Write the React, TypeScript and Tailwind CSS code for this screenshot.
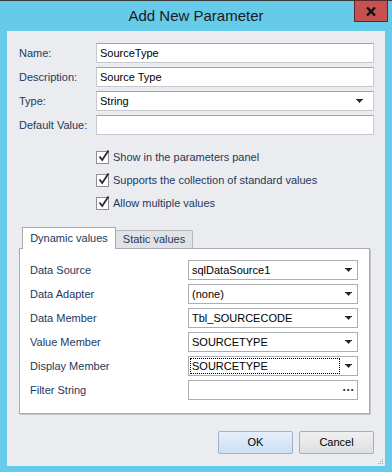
import React from "react";

const font = { fontFamily: '"Liberation Sans", Arial, sans-serif' };

function Arrow() {
  return (
    <svg width="8" height="5" viewBox="0 0 8 5" className="shrink-0">
      <path d="M0 0H7L3.5 4Z" fill="#1f2533" />
      <rect x="0" y="0" width="7" height="1" fill="#1f2533" />
    </svg>
  );
}

function TextInput({ value }: { value?: string }) {
  return (
    <div className="flex h-[20px] flex-1 items-center border border-[#c8c9ce] border-t-[#9fa2aa] bg-white pl-[3px] text-[11px] text-black">
      {value}
    </div>
  );
}

function Combo({ value, focused, ellipsis }: { value?: string; focused?: boolean; ellipsis?: boolean }) {
  return (
    <div className="flex h-[20px] w-[170px] items-center border border-[#abadb3] bg-white text-[11px] text-black">
      {focused ? (
        <div className="ml-[1px] flex h-[16px] flex-1 items-center border border-dotted border-black pl-[1px]">{value}</div>
      ) : (
        <div className="flex-1 pl-[3px]">{value}</div>
      )}
      <div className="flex w-[17px] justify-center">
        {ellipsis ? <span className="text-[12px] font-bold leading-none text-[#1f2533]">···</span> : <Arrow />}
      </div>
    </div>
  );
}

function Check({ label }: { label: string }) {
  return (
    <div className="flex h-[23px] items-center">
      <div className="relative h-[13px] w-[13px] border border-[#8f8f8f] bg-white">
        <svg width="14" height="14" viewBox="0 0 14 14" className="absolute -top-[3px] left-[0px]">
          <path d="M2.5 7.5 L5.2 11 L11.5 1.5" fill="none" stroke="#26293a" strokeWidth="1.8" />
        </svg>
      </div>
      <span className="ml-[4px] text-[11px] text-[#1e395b]">{label}</span>
    </div>
  );
}

export default function App() {
  const top = [
    ["Name:", "SourceType"],
    ["Description:", "Source Type"],
  ];
  const dyn: [string, string, boolean?, boolean?][] = [
    ["Data Source", "sqlDataSource1"],
    ["Data Adapter", "(none)"],
    ["Data Member", "Tbl_SOURCECODE"],
    ["Value Member", "SOURCETYPE"],
    ["Display Member", "SOURCETYPE", true],
    ["Filter String", "", false, true],
  ];
  return (
    <div style={font} className="flex h-[472px] w-[392px] flex-col border-t border-[#3a3a3a] bg-[#65cbe9]">
      <div className="relative flex h-[30px] items-center justify-center">
        <span className="text-[15px] text-[#1b1b1b]">Add New Parameter</span>
        <div className="absolute right-[4px] top-[-1px] flex h-[22px] w-[34px] items-center justify-center border border-[#5a2a2a] bg-[#c75050]">
          <svg width="10" height="9" viewBox="0 0 10 9">
            <path d="M1 0.5 L9 8.5 M9 0.5 L1 8.5" stroke="#111" strokeWidth="2.4" />
          </svg>
        </div>
      </div>
      <div className="mx-[7px] mb-[6px] flex flex-1 flex-col bg-[#ebecf0] pl-[12px] pr-[11px] pt-[12px]">
        <div className="flex flex-col gap-[4px]">
          {top.map(([l, v]) => (
            <div key={l} className="flex items-center">
              <span className="w-[77px] text-[11px] text-[#1e395b]">{l}</span>
              <TextInput value={v} />
            </div>
          ))}
          <div className="flex items-center">
            <span className="w-[77px] text-[11px] text-[#1e395b]">Type:</span>
            <div className="flex h-[20px] flex-1 items-center border border-[#c8c9ce] border-t-[#9fa2aa] bg-white pl-[3px] pr-[9px] text-[11px] text-black">
              <span className="flex-1">String</span>
              <Arrow />
            </div>
          </div>
          <div className="flex items-center">
            <span className="w-[77px] text-[11px] text-[#1e395b]">Default Value:</span>
            <TextInput />
          </div>
        </div>
        <div className="mt-[11px] flex flex-col pl-[77px]">
          <Check label="Show in the parameters panel" />
          <Check label="Supports the collection of standard values" />
          <Check label="Allow multiple values" />
        </div>
        <div className="mt-[12px] flex w-[351px] flex-col">
          <div className="relative z-10 flex h-[21px] items-end pl-[3px]">
            <div className="flex h-[22px] w-[94px] items-center justify-center self-start border border-b-0 border-[#a9abb0] bg-white text-[11px] text-[#1e395b]">
              Dynamic values
            </div>
            <div className="flex h-[18px] w-[77px] items-center justify-center rounded-tr-[2px] border border-l-0 border-b-0 border-[#b5b7bc] bg-[#e1e2e6] text-[11px] text-[#1e395b]">
              Static values
            </div>
          </div>
          <div className="flex h-[166px] flex-col gap-[4px] border border-[#a9abb0] bg-white pl-[10px] pr-[11px] pt-[11px] shadow-[1px_1px_0_#c4c6cb]">
            {dyn.map(([l, v, f, e]) => (
              <div key={l} className="flex items-center">
                <span className="w-[158px] text-[11px] text-[#1e395b]">{l}</span>
                <Combo value={v} focused={f} ellipsis={e} />
              </div>
            ))}
          </div>
        </div>
        <div className="mt-[17px] flex justify-end gap-[6px]">
          <div className="flex h-[23px] w-[75px] items-center justify-center rounded-[2px] border border-[#a4b2c8] bg-gradient-to-b from-[#e6eefa] to-[#cddff6] text-[11px] text-black">
            OK
          </div>
          <div className="flex h-[23px] w-[75px] items-center justify-center rounded-[2px] border border-[#acadb0] bg-gradient-to-b from-[#f0f0f0] to-[#dedfe2] text-[11px] text-black">
            Cancel
          </div>
        </div>
        <div className="relative flex-1">
          <svg width="7" height="7" viewBox="0 0 7 7" className="absolute bottom-[1px] right-[-10px]">
            <rect x="5" y="1" width="1" height="1" fill="#a0a0a0" />
            <rect x="3" y="3" width="1" height="1" fill="#a0a0a0" />
            <rect x="5" y="3" width="1" height="1" fill="#a0a0a0" />
            <rect x="1" y="5" width="1" height="1" fill="#a0a0a0" />
            <rect x="3" y="5" width="1" height="1" fill="#a0a0a0" />
            <rect x="5" y="5" width="1" height="1" fill="#a0a0a0" />
          </svg>
        </div>
      </div>
    </div>
  );
}
